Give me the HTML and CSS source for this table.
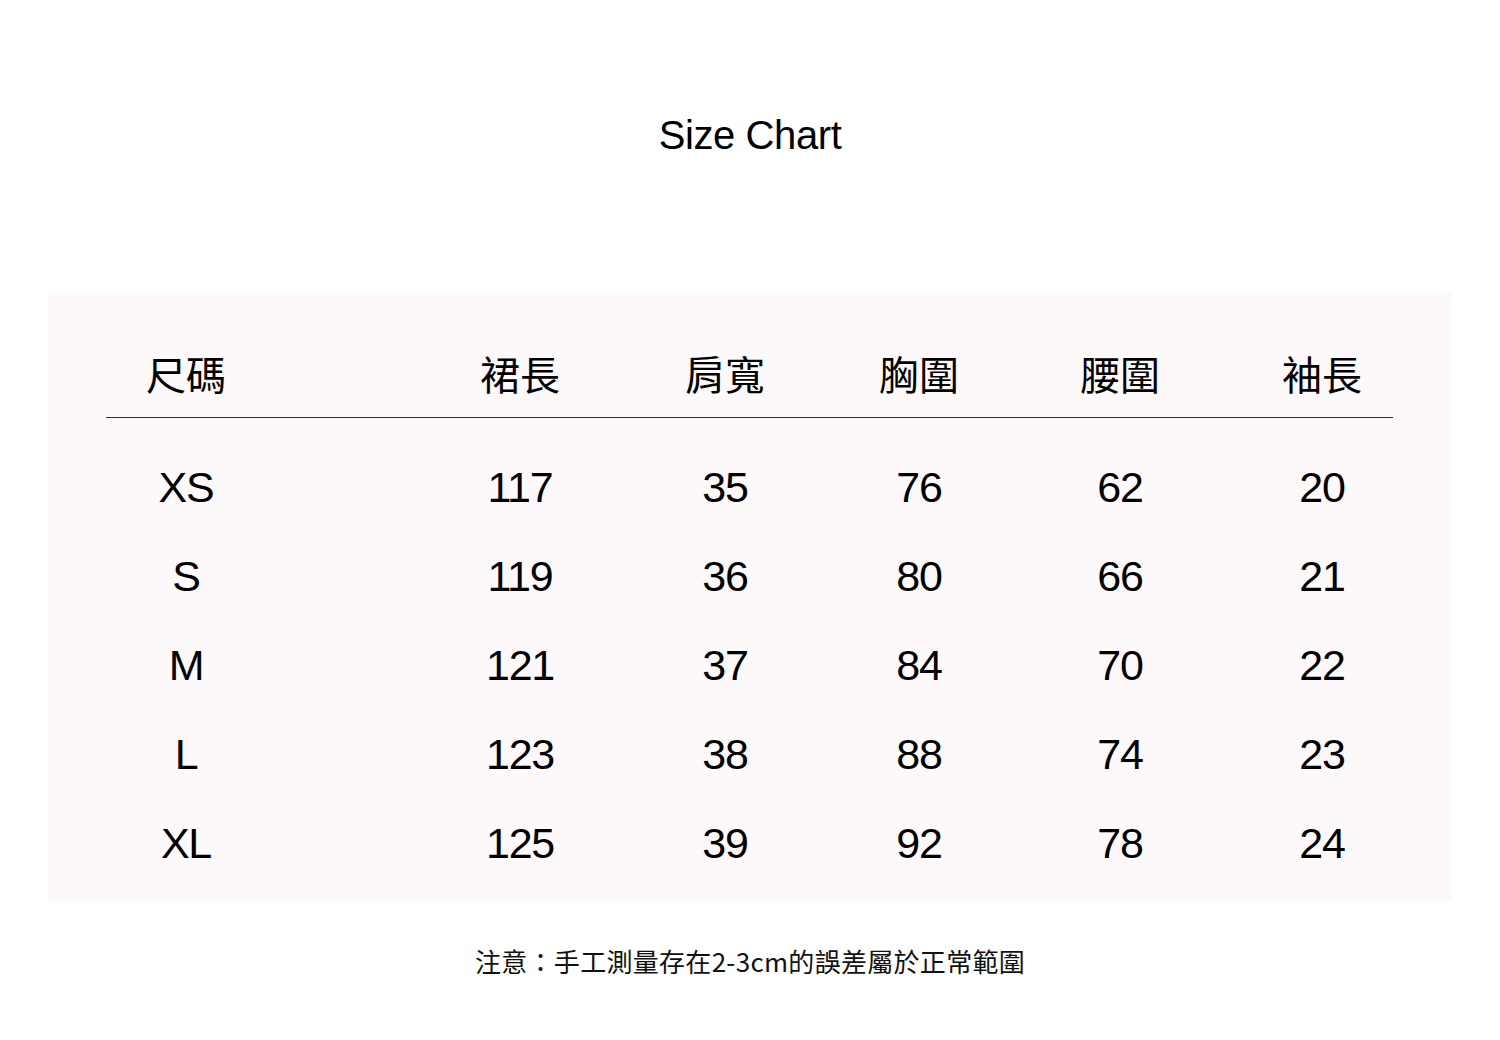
FILE: index.html
```html
<!DOCTYPE html>
<html lang="zh-Hant">
<head>
<meta charset="utf-8">
<title>Size Chart</title>
<link rel="stylesheet" href="styles.css">
</head>
<body>
<main class="page">
  <h1 class="title">Size Chart</h1>
  <section class="panel">
    <div class="grid head">
      <div class="cell first">尺碼</div>
      <div class="cell">裙長</div>
      <div class="cell">肩寬</div>
      <div class="cell">胸圍</div>
      <div class="cell">腰圍</div>
      <div class="cell">袖長</div>
    </div>
    <div class="rule"></div>
    <div class="grid body">
      <div class="cell first">XS</div><div class="cell">117</div><div class="cell">35</div><div class="cell">76</div><div class="cell">62</div><div class="cell">20</div>
      <div class="cell first">S</div><div class="cell">119</div><div class="cell">36</div><div class="cell">80</div><div class="cell">66</div><div class="cell">21</div>
      <div class="cell first">M</div><div class="cell">121</div><div class="cell">37</div><div class="cell">84</div><div class="cell">70</div><div class="cell">22</div>
      <div class="cell first">L</div><div class="cell">123</div><div class="cell">38</div><div class="cell">88</div><div class="cell">74</div><div class="cell">23</div>
      <div class="cell first">XL</div><div class="cell">125</div><div class="cell">39</div><div class="cell">92</div><div class="cell">78</div><div class="cell">24</div>
    </div>
  </section>
  <p class="note">注意：手工測量存在2-3cm的誤差屬於正常範圍</p>
</main>
</body>
</html>
```
FILE: styles.css
```css
html, body {
  margin: 0;
  padding: 0;
  background: #ffffff;
}
body {
  font-family: "Liberation Sans", Arial, "Noto Sans CJK TC", sans-serif;
  color: #111;
}
.page {
  width: 1500px;
  display: flex;
  flex-direction: column;
  align-items: center;
}
.title {
  margin: 110px 0 0;
  font-weight: 400;
  font-size: 40px;
  line-height: 50px;
  letter-spacing: -0.4px;
  color: #000;
}
.panel {
  margin-top: 133px;
  width: 1404px;
  height: 608px;
  box-sizing: border-box;
  background: #fdf9fa;
  padding: 60px 0 0 58px;
}
.grid {
  display: grid;
  grid-template-columns: 314px 200px 210px 178px 224px 180px;
}
.cell {
  text-align: center;
}
.cell.first {
  width: 160px;
}
.head .cell {
  font-family: "Noto Sans CJK TC", "Noto Sans CJK SC", sans-serif;
  font-size: 40px;
  line-height: 40px;
  color: #000;
}
.head {
  margin-bottom: 24px;
}
.rule {
  width: 1287px;
  height: 1px;
  background: #2e2e2e;
}
.body {
  margin-top: 25px;
}
.body .cell {
  font-size: 43px;
  line-height: 89px;
  letter-spacing: -1.2px;
  color: #000;
}
.note {
  margin: 44px 0 0;
  font-family: "Noto Sans CJK TC", "Noto Sans CJK SC", sans-serif;
  font-size: 26px;
  line-height: 32px;
  letter-spacing: 0.3px;
  color: #111;
}
```
